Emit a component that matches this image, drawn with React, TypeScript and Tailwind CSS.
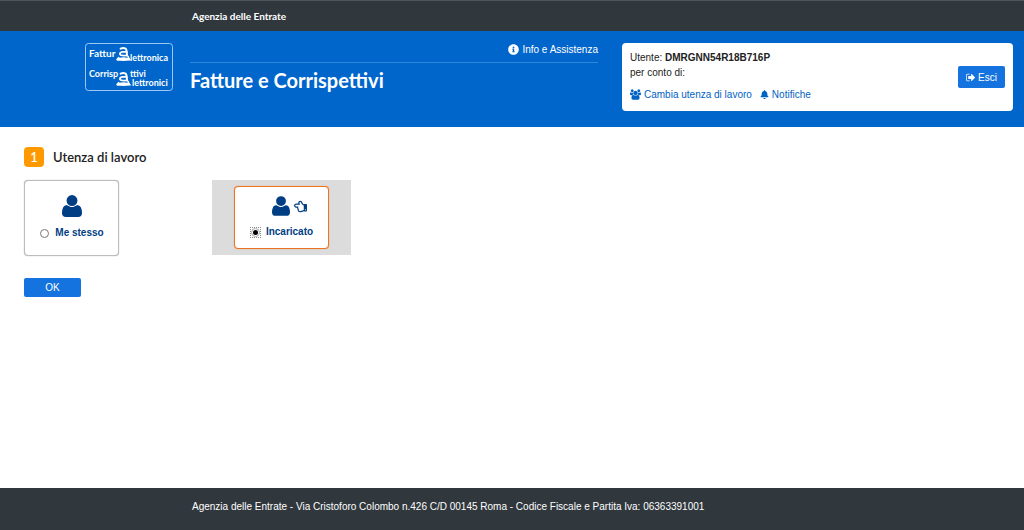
import type { ReactNode } from "react";
import { FaBell, FaInfoCircle, FaRegHandPointLeft } from "react-icons/fa";

function UserIcon({ className }: { className?: string }) {
  return (
    <svg viewBox="0 128 1408 1536" fill="currentColor" aria-hidden className={className}>
      <path d="M1408 1405q0 120-73 189.5t-194 69.5h-874q-121 0-194-69.5t-73-189.5q0-53 3.5-103.5t14-109 26.5-108.5 43-97.5 62-81 85.5-53.5 111.5-20q9 0 42 21.5t74.5 48 108 48 133.5 21.5 133.5-21.5 108-48 74.5-48 42-21.5q61 0 111.5 20t85.5 53.5 62 81 43 97.5 26.5 108.5 14 109 3.5 103.5zm-320-893q0 159-112.5 271.5t-271.5 112.5-271.5-112.5-112.5-271.5 112.5-271.5 271.5-112.5 271.5 112.5 112.5 271.5z" />
    </svg>
  );
}

function UsersIcon({ className }: { className?: string }) {
  return (
    <svg viewBox="0 0 1920 1792" fill="currentColor" aria-hidden className={className}>
      <path d="M593 896q-162 5-265 128h-134q-82 0-138-40.5t-56-118.5q0-353 124-353 6 0 43.5 21t97.5 42.5 119 21.5q67 0 133-23-5 37-5 66 0 139 81 256zm1071 637q0 120-73 189.5t-194 69.5h-874q-121 0-194-69.5t-73-189.5q0-53 3.5-103.5t14-109 26.5-108.5 43-97.5 62-81 85.5-53.5 111.5-20q10 0 43 21.5t73 48 107 48 135 21.5 135-21.5 107-48 73-48 43-21.5q61 0 111.5 20t85.5 53.5 62 81 43 97.5 26.5 108.5 14 109 3.5 103.5zm-1024-1277q0 106-75 181t-181 75-181-75-75-181 75-181 181-75 181 75 75 181zm704 384q0 159-112.5 271.5t-271.5 112.5-271.5-112.5-112.5-271.5 112.5-271.5 271.5-112.5 271.5 112.5 112.5 271.5zm576 225q0 78-56 118.5t-138 40.5h-134q-103-123-265-128 81-117 81-256 0-29-5-66 66 23 133 23 59 0 119-21.5t97.5-42.5 43.5-21q124 0 124 353zm-128-609q0 106-75 181t-181 75-181-75-75-181 75-181 181-75 181 75 75 181z" />
    </svg>
  );
}

function SignOutIcon({ className }: { className?: string }) {
  return (
    <svg viewBox="0 128 1568 1536" fill="currentColor" aria-hidden className={className}>
      <path d="M640 1440q0 4 1 20t.5 26.5-3 23.5-10 19.5-20.5 6.5h-320q-119 0-203.5-84.5t-84.5-203.5v-704q0-119 84.5-203.5t203.5-84.5h320q13 0 22.5 9.5t9.5 22.5q0 4 1 20t.5 26.5-3 23.5-10 19.5-20.5 6.5h-320q-66 0-113 47t-47 113v704q0 66 47 113t113 47h312l11.5 1 11.5 3 8 5.5 7 9 2 13.5zm928-544q0 26-19 45l-544 544q-19 19-45 19t-45-19-19-45v-288h-448q-26 0-45-19t-19-45v-384q0-26 19-45t45-19h448v-288q0-26 19-45t45-19 45 19l544 544q19 19 19 45z" />
    </svg>
  );
}

// The bowed "a" on a wide foot that both logo lines share
function LogoMark({ x, y }: { x: number; y: number }) {
  return (
    <g transform={`translate(${x} ${y})`} fill="none" stroke="currentColor" strokeLinecap="round">
      <path d="M4.6 1.6Q7.4.6 9.6 1.6Q10.8 2.6 11 8.4" strokeWidth="2" />
      <path d="M10.6 4.9H6.4Q3.8 5.4 3.9 7.2Q4.4 9 10.8 8.4" strokeWidth="1.7" />
      <path d="M1.4 12.6Q3.2 11.2 7.4 11.2T13.2 12.6Q7.4 13.4 1.4 12.6" strokeWidth="2" />
      <path d="M2.6 10.6L1.4 12.4M12 9.4L13.2 12.4" strokeWidth="1.6" />
    </g>
  );
}

function Logo() {
  return (
    <svg
      viewBox="0 0 88 48"
      role="img"
      aria-label="Fatturazione elettronica, corrispettivi elettronici"
      className="h-12 w-[88px] text-white"
    >
      <rect x="0.5" y="0.5" width="87" height="47" rx="3" fill="none" stroke="#9cc8f5" />
      <g fill="currentColor" fontFamily="Lato, sans-serif" fontWeight="700" fontSize="9">
        <text x="4" y="14" fontSize="10">Fattur</text>
        <text x="45" y="18">lettronica</text>
        <text x="4" y="34">Corrisp</text>
        <text x="45" y="34">ttivi</text>
        <text x="47" y="43">lettronici</text>
      </g>
      <LogoMark x={31} y={4} />
      <LogoMark x={31} y={29} />
    </svg>
  );
}

interface ChoiceCardProps {
  id: string;
  label: string;
  selected?: boolean;
  children: ReactNode;
}

function ChoiceCard({ id, label, selected, children }: ChoiceCardProps) {
  return (
    <label
      htmlFor={id}
      className={
        selected
          ? "flex h-[63px] w-[95px] flex-col items-center gap-2 rounded-sm border border-[#ec7423] bg-white pt-[9px] text-[#003e84] shadow-[0_0_1px_#ec7423]"
          : "flex h-[76px] w-[95px] flex-col items-center gap-2 rounded-sm border border-[#bdbdbd] bg-white pt-[14px] text-[#003e84] shadow-[0_0_1px_#999]"
      }
    >
      {children}
      <span className="flex items-center gap-[5px] text-[10px] leading-4 font-bold">
        <span className={selected ? "flex border border-dotted border-[#888]" : "flex border border-transparent"}>
          <input
            id={id}
            type="radio"
            name="utenza"
            defaultChecked={selected}
            className="size-[9px] appearance-none rounded-full border border-[#777] bg-white checked:border-[#aaa] checked:bg-black checked:bg-clip-content checked:p-px"
          />
        </span>
        {label}
      </span>
    </label>
  );
}

export default function App() {
  return (
    <div className="flex min-h-screen flex-col bg-white font-['Liberation_Sans',Arial,sans-serif] text-[10px] leading-[15px] text-[#222]">
      <div className="border-t border-[#50575c] bg-[#30373d] pt-2 pb-[7px] pl-48 font-[Lato,sans-serif] font-bold text-white">
        Agenzia delle Entrate
      </div>

      <header className="flex items-start bg-[#0066cc] pt-3 pr-[11px] pb-4 text-white">
        <div className="w-[190px] shrink-0 pl-[85px]">
          <Logo />
        </div>
        <div className="w-[408px] shrink-0">
          <div className="flex justify-end border-b border-[#2f86dd] pb-[6px] leading-[13px]">
            <a href="#info" className="flex items-center gap-[3px]">
              <FaInfoCircle className="size-[11px]" />
              Info e Assistenza
            </a>
          </div>
          <h1 className="pt-[3px] font-[Lato,sans-serif] text-xl leading-7 font-bold">Fatture e Corrispettivi</h1>
        </div>
        <section className="ml-6 flex flex-1 items-center justify-between rounded-sm bg-white px-2 py-[7px] text-[#222]">
          <div>
            <p>
              Utente: <strong>DMRGNN54R18B716P</strong>
            </p>
            <p>per conto di:</p>
            <nav className="flex gap-2 pt-[7px] pb-[2px] text-[#0062c4]">
              <a href="#cambia" className="flex items-center gap-[3px]">
                <UsersIcon className="size-[11px]" />
                Cambia utenza di lavoro
              </a>
              <a href="#notifiche" className="flex items-center gap-[3px]">
                <FaBell className="size-[9px]" />
                Notifiche
              </a>
            </nav>
          </div>
          <button type="button" className="flex h-[22px] items-center gap-[3px] rounded-xs bg-[#1473de] px-2 text-white">
            <SignOutIcon className="size-[9px]" />
            Esci
          </button>
        </section>
      </header>

      <main className="flex-1 px-6 pt-5">
        <h2 className="flex items-center gap-[9px] font-[Lato,sans-serif] text-[13px] leading-5 font-semibold">
          <span className="flex size-5 items-center justify-center rounded-sm bg-[#ff9900] text-white">1</span>
          Utenza di lavoro
        </h2>
        <form onSubmit={(e) => e.preventDefault()}>
          <div className="flex items-start gap-[93px] pt-[13px]">
            <ChoiceCard id="me-stesso" label="Me stesso">
              <UserIcon className="h-[22px] w-5" />
            </ChoiceCard>
            <div className="flex h-[75px] w-[139px] items-center justify-center bg-[#dcdcdc]">
              <ChoiceCard id="incaricato" label="Incaricato" selected>
                <span className="flex items-center gap-1 pl-4">
                  <UserIcon className="h-5 w-[18px]" />
                  <FaRegHandPointLeft className="size-[13px]" />
                </span>
              </ChoiceCard>
            </div>
          </div>
          <button type="submit" className="mt-[22px] h-[19px] w-[57px] rounded-xs bg-[#1473de] text-white">
            OK
          </button>
        </form>
      </main>

      <footer className="bg-[#30373d] pt-[11px] pb-4 pl-48 text-white">
        Agenzia delle Entrate - Via Cristoforo Colombo n.426 C/D 00145 Roma - Codice Fiscale e Partita Iva: 06363391001
      </footer>
    </div>
  );
}
